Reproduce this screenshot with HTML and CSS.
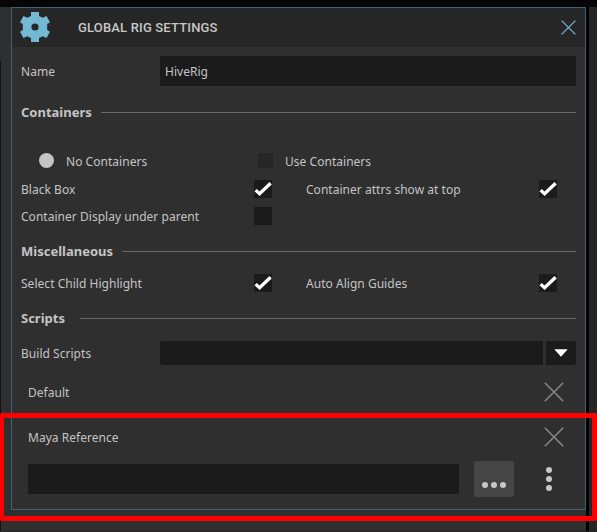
FILE: index.html
```html
<!DOCTYPE html>
<html lang="en">
<head>
<meta charset="utf-8">
<title>Global Rig Settings</title>
<link rel="stylesheet" href="styles.css">
</head>
<body>
<svg class="defs" width="0" height="0" aria-hidden="true">
  <symbol id="check" viewBox="0 0 18 18"><path d="M1.6 10.1 5.6 13.8 16.6 3.2" fill="none" stroke="#fff" stroke-width="3.3"/></symbol>
  <symbol id="cross" viewBox="0 0 20 20"><path d="M.8.8 19.2 19.2M19.2.8.8 19.2" fill="none" stroke="currentColor" stroke-width="1.6"/></symbol>
</svg>
<div class="workspace">
  <main class="panel">
    <header class="header">
      <svg class="gear" viewBox="-15 -15 30 30"><path fill="#74b9d3" fill-rule="evenodd" d="M-4-15H4V-11L7.8-9.3 11.5-11 15-4.7 12.2-3V3L15 4.7 11.5 11 7.8 9.3 4 11V15H-4V11L-7.8 9.3-11.5 11-15 4.7-12.2 3V-3L-15-4.7-11.5-11-7.8-9.3-4-11ZM0-3.6A3.6 3.6 0 1 0 0 3.6 3.6 3.6 0 1 0 0-3.6Z"/></svg>
      <h1 class="title">GLOBAL RIG SETTINGS</h1>
      <svg class="close"><use href="#cross"/></svg>
    </header>
    <div class="row name"><span class="label">Name</span><div class="field"><span class="value">HiveRig</span></div></div>
    <h2 class="section containers"><span>Containers</span></h2>
    <div class="row radios">
      <i class="radio"></i><span class="none">No Containers</span>
      <i class="square"></i><span class="use">Use Containers</span>
    </div>
    <div class="row options"><span class="blackbox">Black Box</span><svg class="box"><use href="#check"/></svg><span class="attrs">Container attrs show at top</span><svg class="box"><use href="#check"/></svg></div>
    <div class="row options display"><span class="under">Container Display under parent</span><i class="box"></i></div>
    <h2 class="section misc"><span>Miscellaneous</span></h2>
    <div class="row options child"><span class="highlight">Select Child Highlight</span><svg class="box"><use href="#check"/></svg><span class="align">Auto Align Guides</span><svg class="box"><use href="#check"/></svg></div>
    <h2 class="section scripts"><span>Scripts</span></h2>
    <div class="row combo"><span class="label build">Build Scripts</span><div class="select"></div><div class="arrow"><svg width="14" height="8" viewBox="0 0 14 8"><path d="M.3.2H13.7L7 7.8Z" fill="#fff"/></svg></div></div>
    <div class="row script"><span>Default</span><svg class="remove"><use href="#cross"/></svg></div>
    <div class="row script maya"><span>Maya Reference</span><svg class="remove"><use href="#cross"/></svg></div>
    <div class="row path">
      <div class="pathfield"></div>
      <div class="browse"><i></i><i></i><i></i></div>
      <div class="kebab"><i></i><i></i><i></i></div>
    </div>
  </main>
  <div class="gutter"></div>
  <aside class="side"></aside>
</div>
<div class="highlight-frame"></div>
</body>
</html>
```

FILE: styles.css
```css
* { box-sizing: border-box; }
body {
  margin: 0;
  padding-top: 7px;
  width: 597px;
  height: 532px;
  overflow: hidden;
  background: #060606;
  color: #c4c4c4;
  font: 12px/18px "Noto Sans", sans-serif;
}
.defs { position: absolute; }
.workspace {
  display: flex;
  height: 525px;
  background: linear-gradient(#121212, #121212) 0 54px / 1px 471px no-repeat, #2f2f2f;
  border-bottom: 1px solid #292425;
}
.panel {
  width: 575px;
  height: 503px;
  margin-left: 11px;
  border: 1px solid #3c617a;
}
.gutter { width: 3px; background: #000; }
.side { flex: 1; background: #262626; }
.header {
  display: flex;
  align-items: center;
  height: 39px;
  padding: 0 9.5px 0 8px;
  background: #262626;
}
.gear { width: 30px; height: 30px; margin-top: -1px; }
.title {
  flex: 1;
  margin: 0 0 0 28px;
  font: 500 13px/18px Roboto, sans-serif;
  letter-spacing: .17px;
  color: #c8c8c8;
}
.close { width: 15px; height: 15px; margin-top: -1px; color: #74b9d3; }
.row { display: flex; align-items: center; white-space: nowrap; }
.row > span, .value { padding-top: 2px; letter-spacing: .03px; }
.name { height: 48px; padding: 0 9px; }
.label { width: 139px; }
.field { flex: 1; height: 30px; padding: 7px 5px; background: #1b1b1b; }
.section {
  display: flex;
  align-items: center;
  gap: 9px;
  height: 35px;
  margin: 0;
  padding: 0 9px;
  font-size: 13px;
  font-weight: 700;
}
.section span { padding-bottom: 2px; }
.section::after { content: ""; flex: 1; height: 1px; background: #696969; }
.radios { height: 28px; margin-top: 17px; padding-left: 27px; }
.radio { width: 15px; height: 15px; margin-top: -1px; border-radius: 50%; background: #c4c4c4; }
.none { width: 192px; margin-left: 12px; }
.square { width: 15px; height: 15px; margin-top: -1px; background: #262626; }
.use { margin-left: 12px; }
.options {
  display: grid;
  grid-template-columns: 233px 52px 233px 18px;
  height: 28px;
  padding-left: 9px;
}
.box { width: 18px; height: 18px; background: #1b1b1b; }
.display { height: 26px; }
.misc { height: 45px; }
.child { grid-template-rows: 18px; height: 18px; }
.scripts { margin: 9px 0 5px; gap: 15px; }
.combo { height: 24px; padding: 0 9px; }
.select { width: 383px; height: 24px; border-radius: 3px 0 0 3px; background: #1b1b1b; }
.arrow {
  display: grid;
  place-items: center;
  width: 30px;
  height: 24px;
  margin-left: 3px;
  border-radius: 0 3px 3px 0;
  background: #1b1b1b;
}
.script { justify-content: space-between; height: 44px; margin-top: 5px; padding: 0 21px 0 16px; }
.maya { height: 46px; margin-top: 0; }
.remove { width: 20px; height: 20px; color: #858585; }
.path { height: 36px; margin-top: 1px; padding-left: 16px; }
.pathfield { width: 431px; height: 30px; background: #1b1b1b; }
.browse {
  display: flex;
  justify-content: center;
  gap: 3.3px;
  width: 40px;
  height: 36px;
  margin-left: 15px;
  padding-top: 21.4px;
  border-radius: 2px;
  background: #454545;
}
.browse i, .kebab i { width: 6px; height: 6px; border-radius: 50%; background: #c8c8c8; }
.kebab { display: grid; gap: 3px; margin-left: 32px; }
.highlight-frame {
  position: absolute;
  left: 0;
  top: 413px;
  width: 597px;
  height: 108px;
  border: 5px solid #f00;
  border-left-width: 4px;
  border-radius: 2px;
}
```
